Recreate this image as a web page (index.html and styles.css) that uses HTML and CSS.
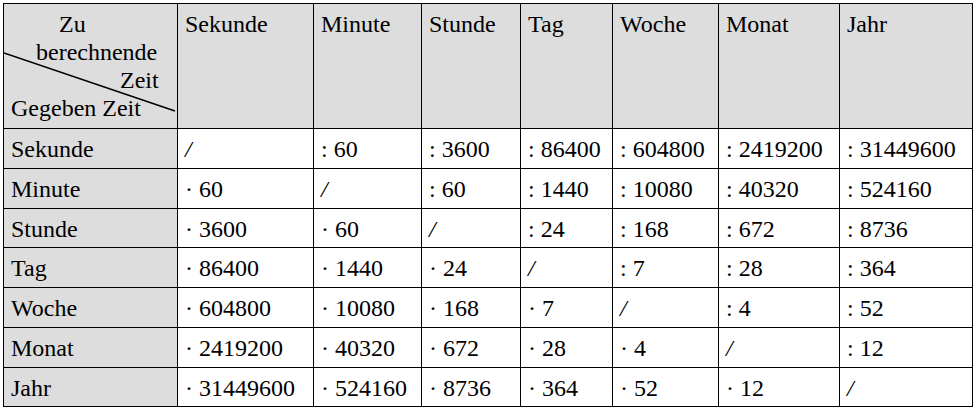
FILE: index.html
```html
<!DOCTYPE html>
<html lang="de">
<head>
<meta charset="utf-8">
<title>Zeiteinheiten umrechnen</title>
<link rel="stylesheet" href="styles.css">
</head>
<body>
<table class="conv">
  <colgroup>
    <col class="c0"><col class="c1"><col class="c2"><col class="c3"><col class="c4"><col class="c5"><col class="c6"><col class="c7">
  </colgroup>
  <thead>
    <tr class="head">
      <th class="corner">
        <svg class="diag" width="176" height="126" viewBox="0 0 176 126" aria-hidden="true"><line x1="0" y1="49" x2="171" y2="107" stroke="#000" stroke-width="1.6"/></svg>
        <div class="l-zu">Zu</div>
        <div class="l-ber">berechnende</div>
        <div class="l-zeit">Zeit</div>
        <div class="l-geg">Gegeben Zeit</div>
      </th>
      <th>Sekunde</th><th>Minute</th><th>Stunde</th><th>Tag</th><th>Woche</th><th>Monat</th><th>Jahr</th>
    </tr>
  </thead>
  <tbody>
    <tr class="r40"><th>Sekunde</th><td><i>/</i></td><td>: 60</td><td>: 3600</td><td>: 86400</td><td>: 604800</td><td>: 2419200</td><td>: 31449600</td></tr>
    <tr class="r40"><th>Minute</th><td>· 60</td><td><i>/</i></td><td>: 60</td><td>: 1440</td><td>: 10080</td><td>: 40320</td><td>: 524160</td></tr>
    <tr class="r39"><th>Stunde</th><td>· 3600</td><td>· 60</td><td><i>/</i></td><td>: 24</td><td>: 168</td><td>: 672</td><td>: 8736</td></tr>
    <tr class="r40"><th>Tag</th><td>· 86400</td><td>· 1440</td><td>· 24</td><td><i>/</i></td><td>: 7</td><td>: 28</td><td>: 364</td></tr>
    <tr class="r40"><th>Woche</th><td>· 604800</td><td>· 10080</td><td>· 168</td><td>· 7</td><td><i>/</i></td><td>: 4</td><td>: 52</td></tr>
    <tr class="r40"><th>Monat</th><td>· 2419200</td><td>· 40320</td><td>· 672</td><td>· 28</td><td>· 4</td><td><i>/</i></td><td>: 12</td></tr>
    <tr class="r39"><th>Jahr</th><td>· 31449600</td><td>· 524160</td><td>· 8736</td><td>· 364</td><td>· 52</td><td>· 12</td><td><i>/</i></td></tr>
  </tbody>
</table>
</body>
</html>
```
FILE: styles.css
```css
html, body {
  margin: 0;
  padding: 0;
  background: #ffffff;
}

body {
  padding: 3px;
  font-family: "Liberation Serif", "Times New Roman", serif;
  font-size: 24px;
  line-height: 28px;
  color: #000000;
}

.conv {
  border-collapse: collapse;
  table-layout: fixed;
  width: 969px;
}

.c0 { width: 174px; }
.c1 { width: 136px; }
.c2 { width: 108px; }
.c3 { width: 99px; }
.c4 { width: 92px; }
.c5 { width: 106px; }
.c6 { width: 121px; }
.c7 { width: 133px; }

.conv th,
.conv td {
  border: 1px solid #000000;
  padding: 6px 7px 0;
  text-align: left;
  vertical-align: top;
  font-weight: normal;
  white-space: nowrap;
  overflow: hidden;
}

.conv thead th,
.conv tbody th {
  background: #dddddd;
}

.conv td {
  background: #ffffff;
}

.head { height: 125px; }
.r40 { height: 40px; }
.r39 { height: 39px; }

.corner {
  position: relative;
}

.diag {
  position: absolute;
  left: 0;
  top: 0;
}

.l-zu { padding-left: 48px; }
.l-ber { padding-left: 25px; }
.l-zeit { padding-left: 109px; }
.l-geg { padding-left: 0; }

.conv i {
  font-style: italic;
}
```
